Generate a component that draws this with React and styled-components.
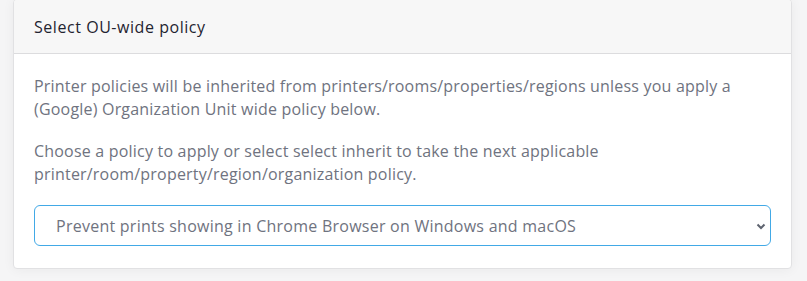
import React from "react"
import styled, { createGlobalStyle } from "styled-components"

const GlobalStyle = createGlobalStyle`
  body {
    margin: 0;
    background: #f5f5f6;
    font-family: "Open Sans", "Liberation Sans", sans-serif;
  }
`

const Page = styled.div`
  padding: 0 15px 13px 13px;
`

const Card = styled.section`
  margin-top: -1px;
  background: #fff;
  border: 1px solid #e1e1e3;
  border-radius: 4px;
  box-shadow: 0 1px 12px rgba(0, 0, 0, 0.05);
  overflow: hidden;
`

const CardHeader = styled.header`
  height: 53px;
  display: flex;
  align-items: center;
  padding: 0 20px;
  background: #f7f7f7;
  border-bottom: 1px solid #dcdcde;
  color: #1f2430;
  font-size: 16px;
  font-weight: 500;
  letter-spacing: 0.55px;
`

const CardBody = styled.div`
  padding: 21px 20px 22px;
`

const Text = styled.p`
  margin: 0 0 19px;
  color: #6f7380;
  font-size: 16px;
  line-height: 23px;
  letter-spacing: 0.2px;
`

const SelectWrap = styled.div`
  position: relative;
  margin-top: 19px;
`

const Select = styled.select`
  appearance: none;
  width: 100%;
  height: 41px;
  padding: 0 36px 0 21px;
  border: 1px solid #42a9e6;
  border-radius: 6px;
  background: #fff;
  color: #6f7380;
  font-family: inherit;
  font-size: 16px;
  letter-spacing: 0.25px;
  outline: none;
`

const Chevron = styled.svg`
  position: absolute;
  right: 5px;
  top: 50%;
  width: 10px;
  height: 7px;
  margin-top: -3px;
  pointer-events: none;
`

const App = () => (
  <>
    <GlobalStyle />
    <Page>
      <Card>
        <CardHeader>Select OU-wide policy</CardHeader>
        <CardBody>
          <Text>
            Printer policies will be inherited from printers/rooms/properties/regions unless you apply a
            (Google) Organization Unit wide policy below.
          </Text>
          <Text>
            Choose a policy to apply or select select inherit to take the next applicable
            printer/room/property/region/organization policy.
          </Text>
          <SelectWrap>
            <Select defaultValue="prevent">
              <option value="prevent">Prevent prints showing in Chrome Browser on Windows and macOS</option>
              <option value="inherit">Inherit</option>
            </Select>
            <Chevron viewBox="0 0 10 7">
              <path d="M1.5 1.5 L5 5 L8.5 1.5" fill="none" stroke="#5f6470" strokeWidth="2" />
            </Chevron>
          </SelectWrap>
        </CardBody>
      </Card>
    </Page>
  </>
)

export default App
